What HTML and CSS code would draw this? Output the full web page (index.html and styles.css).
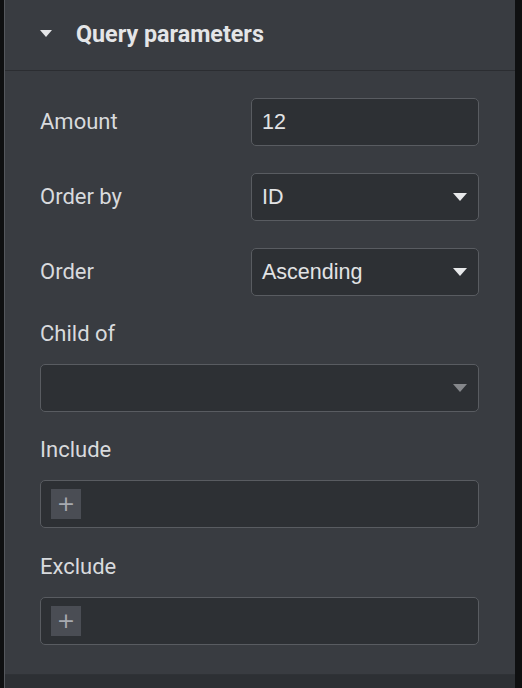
FILE: index.html
```html
<!DOCTYPE html>
<html lang="en">
<head>
    <meta charset="UTF-8">
    <meta name="viewport" content="width=device-width, initial-scale=1.0">
    <title>Query parameters</title>
    <link rel="stylesheet" href="styles.css">
</head>
<body>

<div class="panel">
    <div class="section-head">
        <span class="caret"></span>
        <h2>Query parameters</h2>
    </div>

    <div class="section-body">
        <div class="row">
            <label for="amount">Amount</label>
            <input class="field" type="text" id="amount" value="12" />
        </div>

        <div class="row">
            <label>Order by</label>
            <div class="field select">
                <span>ID</span>
                <span class="arrow"></span>
            </div>
        </div>

        <div class="row">
            <label>Order</label>
            <div class="field select">
                <span>Ascending</span>
                <span class="arrow"></span>
            </div>
        </div>

        <div class="stack">
            <label>Child of</label>
            <div class="field select">
                <span></span>
                <span class="arrow muted"></span>
            </div>
        </div>

        <div class="stack">
            <label>Include</label>
            <div class="field tags">
                <button class="add">+</button>
            </div>
        </div>

        <div class="stack">
            <label>Exclude</label>
            <div class="field tags">
                <button class="add">+</button>
            </div>
        </div>
    </div>

    <div class="panel-foot"></div>
</div>

</body>
</html>
```

FILE: styles.css
```css
body {
    margin: 0;
    background: #0f1011;
    font-family: Roboto, "Liberation Sans", sans-serif;
    color: #d8dadd;
}
.panel {
    width: 510px;
    height: 688px;
    margin-left: 4px;
    border-left: 1px solid #55585d;
    background: #393c41;
    display: flex;
    flex-direction: column;
}
.section-head {
    height: 70px;
    display: flex;
    align-items: center;
    padding-left: 35px;
    border-bottom: 1px solid #2b2d31;
}
.caret {
    width: 0;
    height: 0;
    border-left: 6px solid transparent;
    border-right: 6px solid transparent;
    border-top: 7px solid #e4e5e7;
    margin-right: 24px;
    margin-top: -3px;
}
.section-head h2 {
    margin: 0 0 3px;
    font-size: 23.3px;
    font-weight: 700;
    color: #e4e5e7;
}
.section-body {
    padding: 27px 36px 29px 35px;
    display: flex;
    flex-direction: column;
}
label {
    font-size: 22px;
    line-height: 26px;
    color: #d8dadd;
}
.row {
    display: flex;
    align-items: center;
    justify-content: space-between;
    margin-bottom: 27px;
}
.row:nth-child(3) {
    margin-bottom: 25px;
}
.row .field {
    width: 228px;
}
.field {
    box-sizing: border-box;
    height: 48px;
    border: 1px solid #595c61;
    border-radius: 5px;
    background: #2d3034;
    color: #e2e3e5;
    font-family: "Liberation Sans", Arial, sans-serif;
    font-size: 21.5px;
    padding: 0 10px;
    outline: none;
}
.select {
    display: flex;
    align-items: center;
    justify-content: space-between;
}
.arrow {
    width: 0;
    height: 0;
    border-left: 7px solid transparent;
    border-right: 7px solid transparent;
    border-top: 8px solid #e8e9eb;
    margin-right: 1px;
}
.arrow.muted {
    border-top-color: #85878b;
}
.stack {
    display: flex;
    flex-direction: column;
    gap: 17px;
    margin-bottom: 25px;
}
.stack:last-child {
    margin-top: 1px;
    margin-bottom: 0;
}
.tags {
    display: flex;
    align-items: center;
    padding: 0 10px;
}
.add {
    width: 30px;
    height: 30px;
    border: none;
    padding: 0;
    background: #4a4d54;
    color: #a7aab0;
    font-family: "DejaVu Sans", sans-serif;
    font-size: 22px;
    line-height: 30px;
}
.panel-foot {
    flex: 1;
    border-top: 1px solid #2f3236;
    background: #2d3034;
}
```
